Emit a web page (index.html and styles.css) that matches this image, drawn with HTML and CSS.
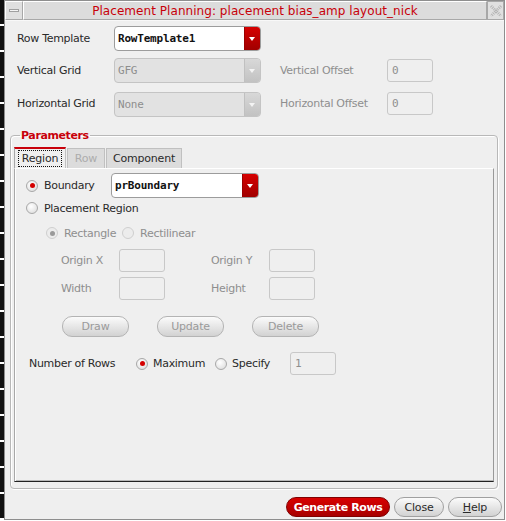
FILE: index.html
```html
<!DOCTYPE html>
<html>
<head>
<meta charset="utf-8">
<link rel="stylesheet" href="styles.css">
</head>
<body>
<div class="desk">
  <div class="strip"></div>
  <div class="window">
    <div class="titlebar">
      <div class="tb-btn min"><span class="dash"></span></div>
      <div class="title">Placement Planning: placement bias_amp layout_nick</div>
      <div class="tb-btn close">
        <svg width="14" height="14" viewBox="0 0 14 14"><path d="M2 2 L12 12 M12 2 L2 12" stroke="#b4b4b4" stroke-width="3" stroke-dasharray="1 1" fill="none"/></svg>
      </div>
    </div>
    <div class="content">
      <div class="form">
        <div class="lbl r1">Row Template</div>
        <div class="combo r1"><span class="ctext">RowTemplate1</span><span class="arrow"></span></div>
        <div class="lbl r2">Vertical Grid</div>
        <div class="combo dis r2"><span class="ctext">GFG</span><span class="arrow"></span></div>
        <div class="lbl dis r2 c3">Vertical Offset</div>
        <div class="field r2"><span>0</span></div>
        <div class="lbl r3">Horizontal Grid</div>
        <div class="combo dis r3"><span class="ctext">None</span><span class="arrow"></span></div>
        <div class="lbl dis r3 c3">Horizontal Offset</div>
        <div class="field r3"><span>0</span></div>
      </div>
      <fieldset class="group">
        <legend>Parameters</legend>
        <div class="tabs">
          <div class="tab active"><span class="focus">Region</span></div>
          <div class="tab row-tab disabled">Row</div>
          <div class="tab comp-tab">Component</div>
        </div>
        <div class="panel">
          <div class="line l1">
            <span class="radio on"></span><span class="rlabel w-boundary">Boundary</span>
            <div class="combo small"><span class="ctext">prBoundary</span><span class="arrow"></span></div>
          </div>
          <div class="line l2">
            <span class="radio"></span><span class="rlabel">Placement Region</span>
          </div>
          <div class="sub">
            <div class="line l3">
              <span class="radio on dis"></span><span class="rlabel dis">Rectangle</span>
              <span class="radio dis gap"></span><span class="rlabel dis">Rectilinear</span>
            </div>
            <div class="grid2">
              <span class="lbl dis">Origin X</span><span class="field"></span>
              <span class="lbl dis col4">Origin Y</span><span class="field"></span>
              <span class="lbl dis">Width</span><span class="field"></span>
              <span class="lbl dis col4">Height</span><span class="field"></span>
            </div>
            <div class="btnrow">
              <span class="pill dis">Draw</span>
              <span class="pill dis">Update</span>
              <span class="pill dis">Delete</span>
            </div>
          </div>
          <div class="line nrows">
            <span class="lbl nlabel">Number of Rows</span>
            <span class="radio on"></span><span class="rlabel">Maximum</span>
            <span class="radio gap2"></span><span class="rlabel">Specify</span>
            <span class="field spec"><span>1</span></span>
          </div>
        </div>
      </fieldset>
      <div class="footer">
        <span class="pill primary">Generate Rows</span>
        <span class="pill close-btn">Close</span>
        <span class="pill help"><u>H</u>elp</span>
      </div>
    </div>
  </div>
</div>
</body>
</html>
```
FILE: styles.css
```css
* { box-sizing: border-box; }
html, body { margin: 0; padding: 0; background: #fff; }
body {
  width: 506px; height: 521px; overflow: hidden;
  font-family: "DejaVu Sans", sans-serif; font-size: 11px; color: #2a2a2a;
}
.desk { display: flex; height: 520px; }
.strip {
  width: 4px;
  background: repeating-linear-gradient(to bottom, #111 0, #111 24px, #fff 24px, #fff 26px);
}
.window {
  width: 501px; height: 520px;
  border: 1px solid #8e8e8e;
  background: #efefef;
  display: flex; flex-direction: column;
}
.titlebar {
  height: 20px; display: flex; align-items: stretch;
  background: #dcdcdc; border-bottom: 1px solid #f8f8f8;
}
.tb-btn {
  width: 18px; border: 1px solid #a8a8a8; background: #e0e0e0;
  display: flex; align-items: center; justify-content: center;
}
.tb-btn.min { border-left-color: #fff; border-top-color: #fff; }
.dash { width: 10px; height: 3px; border: 1px solid #a0a0a0; background: #f4f4f4; }
.tb-btn.close { width: 17px; }
.title {
  flex: 1; text-align: center; color: #c8000a; font-size: 12px; line-height: 18px;
  border: 1px solid #a8a8a8; border-left-color: #fff; border-top-color: #fff; letter-spacing: 0.05px;
}
.content { flex: 1; display: flex; flex-direction: column; padding: 5px 2px 0 5px; }

.form {
  display: grid;
  grid-template-columns: 97px 147px 19px 107px 46px;
  grid-template-rows: 25px 25px 25px;
  row-gap: 7px;
  padding-left: 7px;
}
.lbl { align-self: center; letter-spacing: -0.3px; }
.lbl.dis, .rlabel.dis { color: #8e8e8e; }
.form .r1 { grid-row: 1; }
.form .r2 { grid-row: 2; }
.form .r3 { grid-row: 3; margin-top: 2px; }
.form .c3 { grid-column: 4; }
.form .field { grid-column: 5; align-self: center; height: 23px; }

.combo {
  display: flex; height: 25px; border: 1px solid #9c9c9c; border-radius: 4px;
  background: #fff; overflow: hidden;
}
.ctext {
  flex: 1; padding-left: 3px; line-height: 23px;
  font-family: "DejaVu Sans Mono", monospace; font-size: 11px; font-weight: bold; color: #111;
  letter-spacing: -0.2px;
}
.arrow {
  width: 16px; position: relative;
  background: linear-gradient(to bottom, #d60000, #a00000);
  border-left: 1px solid #9a0000;
}
.arrow::after {
  content: ""; position: absolute; left: 4px; top: 10px;
  border-left: 3.5px solid transparent; border-right: 3.5px solid transparent; border-top: 4px solid #fff;
}
.combo.dis { background: #e2e2e2; border-color: #c4c4c4; }
.combo.dis .ctext { color: #8e8e8e; font-weight: normal; }
.combo.dis .arrow { background: linear-gradient(to bottom, #d8d8d8, #c2c2c2); border-left-color: #c0c0c0; }
.combo.dis .arrow::after { border-top-color: #f4f4f4; }

.field {
  width: 46px; height: 23px; border: 1px solid #c8c8c8; border-radius: 3px;
  background: #efefef; display: flex; align-items: center; padding-left: 4px;
  font-family: "DejaVu Sans Mono", monospace; font-size: 11px; color: #8e8e8e;
}

.group {
  margin: 14px 0 0 0; padding: 0 3px 6px 3px; width: 488px;
  border: 1px solid #b8b8b8; border-radius: 4px; box-shadow: inset 1px 1px 0 #fff, 1px 1px 0 #fff;
  min-width: 0;
}
.group legend {
  color: #c8000a; font-weight: bold; padding: 0 1px; margin-left: 6px; letter-spacing: -0.4px;
}
.tabs { display: flex; align-items: flex-end; height: 21px; margin-top: 5px; }
.tab {
  height: 20px; line-height: 19px; background: #dcdcdc; text-align: center;
  border: 1px solid #c0c0c0; border-bottom: none; letter-spacing: -0.2px;
}
.tab.active {
  width: 52px; height: 21px; background: #efefef; border-top: 2px solid #c8000a;
  border-left-color: #a8a8a8; margin-right: 1px; padding-left: 3px; text-align: left;
}
.row-tab { width: 38px; margin-right: 1px; }
.comp-tab { width: 76px; }
.focus { display: inline-block; width: 44px; text-align: center; border: 1px dotted #111; line-height: 15px; margin-top: 1px; }
.tab.disabled { color: #acacac; }
.panel {
  height: 314px; border-left: 1px solid #a8a8a8; border-top: 1px solid #fff;
  border-right: 1px solid #9a9a9a; border-bottom: 1px solid #222;
  box-shadow: inset 1px 0 0 #fff, inset 0 -1px 0 #b8b8b8;
  padding: 4px 0 0 11px;
}
.line { display: flex; align-items: center; height: 25px; }
.radio {
  width: 12px; height: 12px; border-radius: 50%; border: 1px solid #a8a8a8; flex: none;
  background: radial-gradient(circle at 40% 35%, #fff, #d8d8d8); position: relative; margin-right: 6px;
}
.radio.on::after {
  content: ""; position: absolute; left: 2.5px; top: 2.5px; width: 5px; height: 5px; border-radius: 50%; background: #d40000;
}
.radio.dis { border-color: #cfcfcf; background: #ececec; }
.radio.on.dis::after { background: #9a9a9a; }
.rlabel { letter-spacing: -0.3px; white-space: nowrap; }
.w-boundary { width: 67px; }
.combo.small { width: 148px; }
.l2 { height: 18px; margin-top: 1px; }
.sub { padding-left: 20px; }
.l3 { height: 18px; margin-top: 7px; }
.radio.gap { margin-left: 6px; }
.grid2 {
  display: grid; grid-template-columns: 58px 46px 46px 58px 46px; grid-template-rows: 23px 23px;
  row-gap: 5px; margin-top: 7px; padding-left: 15px;
}
.grid2 .col4 { grid-column: 4; }
.btnrow { display: flex; gap: 28px; margin-top: 16px; padding-left: 16px; }
.pill {
  display: inline-flex; align-items: center; justify-content: center; white-space: nowrap;
  height: 21px; width: 67px; border: 1px solid #a0a0a0; border-radius: 10px;
  background: linear-gradient(to bottom, #fbfbfb, #d2d2d2); color: #2a2a2a; letter-spacing: -0.2px;
}
.pill.dis { color: #9a9a9a; border-color: #b4b4b4; }
.nrows { margin-top: 14px; padding-left: 3px; }
.nlabel { width: 107px; flex: none; }
.nrows .radio { margin-right: 5px; }
.nrows .radio.gap2 { margin-left: 10px; }
.spec { margin-left: 20px; }
.footer { display: flex; justify-content: flex-end; gap: 4px; margin-top: 8px; }
.footer .pill { height: 20px; }
.footer .primary {
  width: 104px; background: linear-gradient(to bottom, #d80000, #a80000); border-color: #800000;
  color: #fff; font-weight: bold; letter-spacing: -0.4px;
}
.footer .close-btn { width: 50px; }
.footer .help { width: 54px; }
```
